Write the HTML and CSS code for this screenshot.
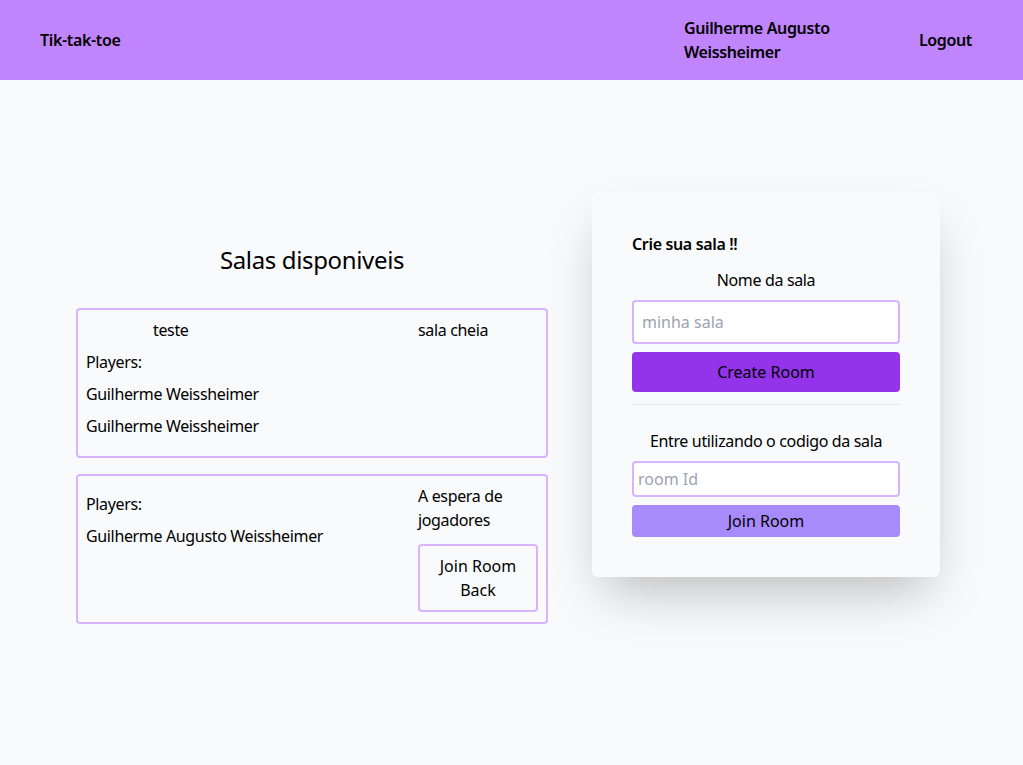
FILE: index.html
```html
<!DOCTYPE html>
<html lang="pt">
<head>
<meta charset="utf-8">
<title>Tik-tak-toe</title>
<link rel="stylesheet" href="styles.css">
</head>
<body>
<header class="topbar">
  <div class="brand">Tik-tak-toe</div>
  <div class="user">Guilherme Augusto<br>Weissheimer</div>
  <div class="logout">Logout</div>
</header>
<main class="main">
  <section class="rooms">
    <h2 class="rooms-title">Salas disponiveis</h2>
    <div class="room">
      <div class="room-left">
        <div class="room-name">teste</div>
        <div class="line">Players:</div>
        <div class="line">Guilherme Weissheimer</div>
        <div class="line">Guilherme Weissheimer</div>
      </div>
      <div class="room-right">
        <div class="status">sala cheia</div>
      </div>
    </div>
    <div class="room">
      <div class="room-left">
        <div class="line first">Players:</div>
        <div class="line">Guilherme Augusto Weissheimer</div>
      </div>
      <div class="room-right">
        <div class="status">A espera de jogadores</div>
        <button class="join-back">Join Room<br>Back</button>
      </div>
    </div>
  </section>
  <section class="panel">
    <div class="panel-title">Crie sua sala !!</div>
    <div class="label">Nome da sala</div>
    <input class="input big" type="text" placeholder="minha sala">
    <button class="btn create">Create Room</button>
    <hr class="divider">
    <div class="label second">Entre utilizando o codigo da sala</div>
    <input class="input small" type="text" placeholder="room Id">
    <button class="btn join">Join Room</button>
  </section>
</main>
</body>
</html>
```
FILE: styles.css
```css
* { box-sizing: border-box; }
html, body { margin: 0; padding: 0; }
body {
  font-family: "Noto Sans", "DejaVu Sans", sans-serif;
  font-size: 16px;
  line-height: 24px;
  letter-spacing: -0.35px;
  color: #000;
  background: #f9fafb;
  min-height: 765px;
}
.topbar {
  height: 80px;
  background: #c084fc;
  display: flex;
  align-items: center;
  padding: 0 51px 0 40px;
  font-weight: 600;
}
.brand { flex: 1; }
.user { width: 235px; }
.logout { }
.main {
  display: flex;
  align-items: flex-start;
  padding-left: 76px;
}
.rooms {
  width: 472px;
  margin-top: 164px;
}
.rooms-title {
  margin: 0 0 32px;
  font-size: 24px;
  line-height: 32px;
  font-weight: 400;
  text-align: center;
}
.room {
  height: 150px;
  border: 2px solid #d8b4fe;
  border-radius: 4px;
  display: flex;
  padding: 8px 8px 10px 8px;
  margin-bottom: 16px;
}
.room-left { flex: 1; }
.room-name { padding-left: 67px; margin-bottom: 8px; }
.line { margin-bottom: 8px; }
.line.first { margin-top: 8px; }
.room-right {
  width: 120px;
  display: flex;
  flex-direction: column;
}
.status { margin-bottom: 8px; }
.join-back {
  font: inherit;
  color: #000;
  background: transparent;
  border: 2px solid #d8b4fe;
  border-radius: 4px;
  padding: 8px 0;
  height: 68px;
  width: 120px;
  margin-top: auto;
}
.panel {
  margin-top: 112px;
  margin-left: 44px;
  width: 348px;
  padding: 40px;
  background: #f9fafb;
  border-radius: 6px;
  box-shadow: 0 25px 50px -12px rgba(0,0,0,0.25);
  display: flex;
  flex-direction: column;
}
.panel-title { font-weight: 600; margin-top: 0; margin-bottom: 12px; }
.label { text-align: center; margin-bottom: 8px; }
.label.second { margin-bottom: 8px; }
.input {
  font: inherit;
  border: 2px solid #d8b4fe;
  border-radius: 4px;
  background: #fff;
  color: #000;
  outline: none;
}
.input::placeholder { color: #9ca3af; }
.input.big { height: 44px; padding: 0 8px; }
.input.small { height: 36px; padding: 0 4px; }
.btn {
  font: inherit;
  color: #000;
  border: none;
  border-radius: 4px;
  margin-top: 8px;
}
.btn.create { background: #9333ea; height: 40px; }
.btn.join { background: #a78bfa; height: 32px; }
.divider {
  border: none;
  border-top: 1px solid #e5e7eb;
  margin: 12px 0 24px;
}
```
